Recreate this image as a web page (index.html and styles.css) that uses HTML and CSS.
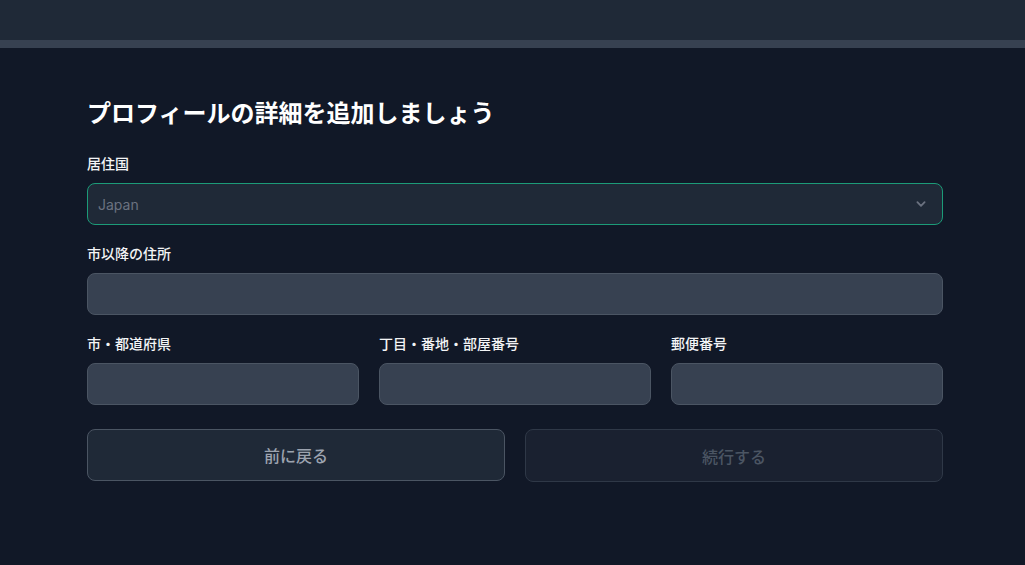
FILE: index.html
```html
<!DOCTYPE html>
<html lang="ja">
<head>
<meta charset="utf-8">
<title>プロフィール</title>
<link rel="stylesheet" href="styles.css">
</head>
<body>
<header class="topbar"></header>
<div class="progress"><div class="progress-fill" style="width:0%"></div></div>
<main class="page">
  <h1 class="title">プロフィールの詳細を追加しましょう</h1>
  <form class="form">
    <div class="field">
      <label class="label">居住国</label>
      <div class="select">
        <span class="select-value">Japan</span>
        <svg class="chevron" width="18" height="18" viewBox="0 0 20 20" fill="none"><path d="M6 8l4 4 4-4" stroke="currentColor" stroke-width="2" stroke-linecap="round" stroke-linejoin="round"/></svg>
      </div>
    </div>
    <div class="field">
      <label class="label">市以降の住所</label>
      <div class="input"></div>
    </div>
    <div class="row3">
      <div class="field">
        <label class="label">市・都道府県</label>
        <div class="input"></div>
      </div>
      <div class="field">
        <label class="label">丁目・番地・部屋番号</label>
        <div class="input"></div>
      </div>
      <div class="field">
        <label class="label">郵便番号</label>
        <div class="input"></div>
      </div>
    </div>
    <div class="actions">
      <button type="button" class="btn btn-back">前に戻る</button>
      <button type="button" class="btn btn-next" disabled>続行する</button>
    </div>
  </form>
</main>
</body>
</html>
```
FILE: styles.css
```css
* { box-sizing: border-box; }
html, body { margin: 0; padding: 0; }
body {
  background: #111827;
  color: #ffffff;
  font-family: "Inter", "Noto Sans CJK JP", sans-serif;
  width: 1025px;
  height: 565px;
  overflow: hidden;
}
.topbar {
  height: 40px;
  background: #1f2937;
}
.progress {
  height: 8px;
  background: #374151;
}
.progress-fill {
  height: 100%;
  background: #10b981;
}
.page {
  width: 856px;
  margin-left: 87px;
  padding-top: 50px;
}
.title {
  margin: 0;
  font-size: 24px;
  line-height: 32px;
  font-weight: 700;
  color: #ffffff;
}
.form {
  margin-top: 24px;
  display: flex;
  flex-direction: column;
  gap: 19px;
}
.field {
  display: flex;
  flex-direction: column;
}
.label {
  font-size: 14px;
  line-height: 20px;
  font-weight: 500;
  color: #f3f4f6;
  margin-bottom: 9px;
}
.select {
  height: 42px;
  border: 1px solid #1c9b78;
  border-radius: 8px;
  background: #1f2937;
  display: flex;
  align-items: center;
  justify-content: space-between;
  padding: 0 12px 0 10px;
}
.select-value {
  font-size: 14px;
  color: #6b7280;
}
.chevron { color: #6b7280; display: block; }
.input {
  height: 42px;
  border: 1px solid #4b5563;
  border-radius: 8px;
  background: #374151;
}
.row3 {
  display: grid;
  grid-template-columns: repeat(3, 1fr);
  gap: 20px;
}
.actions {
  margin-top: 5px;
  display: grid;
  grid-template-columns: 1fr 1fr;
  gap: 20px;
  align-items: start;
}
.btn {
  font-family: inherit;
  font-size: 16px;
  font-weight: 500;
  border-radius: 8px;
  cursor: pointer;
}
.btn-back {
  height: 52px;
  background: #1f2937;
  border: 1px solid #4b5563;
  color: #9ca3af;
}
.btn-next {
  height: 53px;
  background: #1a2130;
  border: 1px solid #2f3847;
  color: #4b5563;
  cursor: default;
}
```
